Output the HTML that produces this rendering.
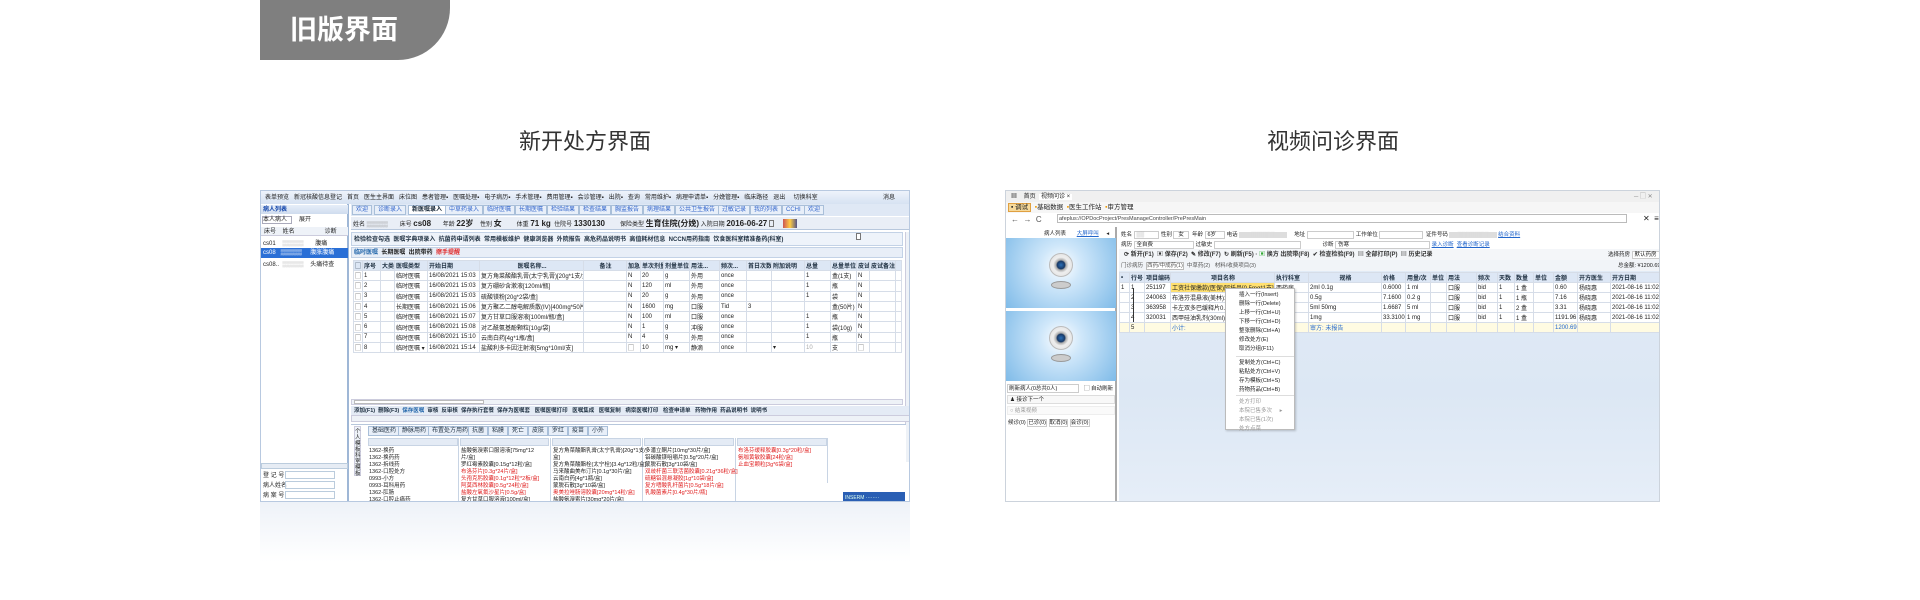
<!DOCTYPE html>
<html><head><meta charset="utf-8">
<style>
*{margin:0;padding:0;box-sizing:border-box}
body{width:1920px;height:600px;background:#fff;position:relative;overflow:hidden;font-family:"Liberation Sans","Noto Sans CJK SC",sans-serif;color:#222}
.a{position:absolute}
.t{position:absolute;white-space:nowrap;font-size:7px;line-height:8px;color:#222}
.tag{left:260px;top:0;width:190px;height:60px;background:#7f7f7f;border-bottom-right-radius:52px;color:#fff;font-weight:bold;font-size:27px;line-height:60px;padding-left:30px;font-family:"Liberation Sans","Noto Sans CJK SC",sans-serif}
.title{font-size:22px;color:#333;top:124px;font-family:"Liberation Sans","Noto Sans CJK SC",sans-serif}
table{border-collapse:collapse;table-layout:fixed;position:absolute}
td{border:1px solid #d6dde8;font-size:6px;white-space:nowrap;overflow:hidden;padding-left:1px;color:#222}
.hd td{background:#dde7f5;font-weight:bold;color:#234}
.red{color:#e02020}
.tab{position:absolute;height:10px;border:1px solid #a9bfd9;background:#e8eff9;font-size:6px;line-height:8px;padding:0 3px;color:#36c;white-space:nowrap}
</style></head><body>

<div class="a tag">旧版界面</div>
<div class="a title" style="left:519px">新开处方界面</div>
<div class="a title" style="left:1267px">视频问诊界面</div>

<!-- LEFT SCREENSHOT -->
<div class="a" style="left:260px;top:502px;width:650px;height:60px;background:linear-gradient(#eef2f8,#fff)"></div>
<div class="a" style="left:260px;top:190px;width:650px;height:312px;background:#fff;border:1px solid #b8c9e0;overflow:hidden">
  <div class="a" style="left:0;top:0;width:650px;height:13px;background:linear-gradient(#eef3fb,#d6e2f2)"></div>
  <div class="t" style="left:4px;top:3px;font-size:6px">表单预览 &nbsp; 新冠核酸信息登记 &nbsp; 首页 &nbsp; 医生主界面 &nbsp; 床位图 &nbsp; 患者管理▪ &nbsp; 医嘱处理▪ &nbsp; 电子病历▪ &nbsp; 手术管理▪ &nbsp; 费用管理▪ &nbsp; 会诊管理▪ &nbsp; 出院▪ &nbsp; 查询 &nbsp; 常用维护▪ &nbsp; 病理申请单▪ &nbsp; 分娩管理▪ &nbsp; 临床路径 &nbsp; 退出 &nbsp; &nbsp; 切换科室</div>
  <div class="t" style="left:622px;top:3px;font-size:6px">消息</div>
  <!-- left panel -->
  <div class="a" style="left:0;top:13px;width:88px;height:299px;background:#fff;border-right:2px solid #9fb7d6"></div>
  <div class="a" style="left:0;top:14px;width:87px;height:9px;background:linear-gradient(#e6eef9,#cfdcee)"></div>
  <div class="t" style="left:2px;top:15px;font-size:6px;color:#14a;font-weight:bold">病人列表</div>
  <div class="a" style="left:1px;top:25px;width:30px;height:8px;border:1px solid #aab;background:#fff"></div>
  <div class="t" style="left:2px;top:25px;font-size:6px">本人病人</div>
  <div class="t" style="left:38px;top:25px;font-size:6px">展开</div>
  <div class="a" style="left:0;top:36px;width:87px;height:9px;background:#eef2f8;border-bottom:1px solid #ccd"></div>
  <div class="t" style="left:3px;top:37px;font-size:6px">床号 &nbsp; &nbsp;姓名 &nbsp; &nbsp; &nbsp; &nbsp; &nbsp; &nbsp; &nbsp; &nbsp; &nbsp;诊断</div>
  <div class="t" style="left:2px;top:49px;font-size:6px">cs01 &nbsp; &nbsp;<span style="color:#bbb">▒▒▒▒▒</span> &nbsp; &nbsp; &nbsp; 腹痛</div>
  <div class="a" style="left:0;top:57px;width:87px;height:10px;background:#2a6fd6"></div>
  <div class="t" style="left:2px;top:58px;font-size:6px;color:#fff">cs08 &nbsp; ▒▒▒▒▒ &nbsp; &nbsp; 腹胀腹痛</div>
  <div class="t" style="left:2px;top:70px;font-size:6px">cs08.. &nbsp;<span style="color:#bbb">▒▒▒▒▒</span> &nbsp; &nbsp;头痛待查</div>
  <div class="a" style="left:0;top:272px;width:87px;height:6px;background:#e6ecf4;border:1px solid #bcd"></div>
  <div class="t" style="left:2px;top:281px;font-size:6px">登 记 号</div><div class="a" style="left:24px;top:280px;width:50px;height:8px;border:1px solid #bcd"></div>
  <div class="t" style="left:2px;top:291px;font-size:6px">病人姓名</div><div class="a" style="left:24px;top:290px;width:50px;height:8px;border:1px solid #bcd"></div>
  <div class="t" style="left:2px;top:301px;font-size:6px">病 案 号</div><div class="a" style="left:24px;top:300px;width:50px;height:8px;border:1px solid #bcd"></div>
  <!-- tabs -->
  <div class="a" style="left:90px;top:13px;width:560px;height:12px;background:#dfe8f5"></div>
  <div class="tab" style="left:91px;top:14px">欢迎</div>
  <div class="tab" style="left:113px;top:14px">诊断录入</div>
  <div class="tab" style="left:147px;top:14px;background:#fff;color:#123;font-weight:bold">新医嘱录入</div>
  <div class="tab" style="left:184px;top:14px">中草药录入</div>
  <div class="tab" style="left:222px;top:14px">临时医嘱</div>
  <div class="tab" style="left:254px;top:14px">长期医嘱</div>
  <div class="tab" style="left:286px;top:14px">检验结果</div>
  <div class="tab" style="left:318px;top:14px">检查结果</div>
  <div class="tab" style="left:350px;top:14px">胸监报告</div>
  <div class="tab" style="left:382px;top:14px">病理结果</div>
  <div class="tab" style="left:414px;top:14px">公共卫生报告</div>
  <div class="tab" style="left:457px;top:14px">过敏记录</div>
  <div class="tab" style="left:489px;top:14px">我的列表</div>
  <div class="tab" style="left:521px;top:14px">CCHI</div>
  <div class="tab" style="left:543px;top:14px">欢迎</div>
  <!-- info -->
  <div class="a" style="left:90px;top:26px;width:560px;height:13px;background:#e9eef6;border-bottom:1px solid #b7c7dc"></div>
  <div class="t" style="left:92px;top:29px;font-size:6px">姓名 <span style="color:#999">▒▒▒▒▒</span> &nbsp; &nbsp; &nbsp; 床号 <b style="font-size:8px">cs08</b> &nbsp; &nbsp; &nbsp; 年龄 <b style="font-size:8px">22岁</b> &nbsp; &nbsp;性别 <b style="font-size:8px">女</b> &nbsp; &nbsp; &nbsp; &nbsp; 体重 <b style="font-size:8px">71 kg</b> &nbsp;住院号 <b style="font-size:8px">1330130</b> &nbsp; &nbsp; &nbsp; &nbsp; 保险类型 <b style="font-size:8px">生育住院(分娩)</b> 入院日期 <b style="font-size:8px">2016-06-27</b></div>
  <div class="a" style="left:508px;top:29px;width:5px;height:7px;border:1px solid #777"></div>
  <div class="a" style="left:522px;top:28px;width:14px;height:9px;background:linear-gradient(90deg,#c55,#fc4,#558)"></div>
  <!-- toolbar -->
  <div class="a" style="left:90px;top:41px;width:552px;height:14px;background:#eef3fa;border:1px solid #c3d2e6"></div>
  <div class="t" style="left:93px;top:45px;font-size:6px;font-weight:bold;color:#234">检验检查勾选 &nbsp;医嘱字典项录入 &nbsp;抗菌药申请列表 &nbsp;常用模板维护 &nbsp;健康浏览器 &nbsp;外院报告 &nbsp;高危药品说明书 &nbsp;高值耗材信息 &nbsp;NCCN用药指南 &nbsp;饮食医科室精准备药(科室)</div>
  <div class="a" style="left:595px;top:42px;width:5px;height:7px;border:1px solid #777;background:#fff"></div>
  <div class="a" style="left:90px;top:56px;width:552px;height:11px;background:#e8eef7;border:1px solid #c3d2e6"></div>
  <div class="t" style="left:93px;top:58px;font-size:6px;font-weight:bold"><span style="color:#26a">临时医嘱</span> &nbsp;长期医嘱 &nbsp;出院带药 &nbsp;<span class="red">擦手提醒</span></div>
  <!-- main table -->
  <table style="left:92px;top:69px;width:548px">
    <colgroup><col style="width:9px"><col style="width:18px"><col style="width:14px"><col style="width:33px"><col style="width:52px"><col style="width:104px"><col style="width:43px"><col style="width:14px"><col style="width:23px"><col style="width:26px"><col style="width:30px"><col style="width:27px"><col style="width:25px"><col style="width:33px"><col style="width:26px"><col style="width:26px"><col style="width:13px"><col style="width:26px"><col style="width:6px"></colgroup>
    <tr class="hd" style="height:9px"><td>▢</td><td>序号</td><td>大类</td><td>医嘱类型</td><td>开始日期</td><td style="text-align:center">医嘱名称...</td><td style="text-align:center">备注</td><td>加急</td><td>单次剂量</td><td>剂量单位</td><td>用法...</td><td>频次...</td><td>首日次数</td><td>附加说明</td><td>总量</td><td>总量单位</td><td>皮试</td><td>皮试备注</td><td></td></tr>
    <tr style="height:10.3px"><td>▢</td><td>1</td><td></td><td>临时医嘱</td><td>16/08/2021 15:03</td><td>复方角菜酸酯乳膏(太宁乳膏)[20g*1支/盒]</td><td></td><td>N</td><td>20</td><td>g</td><td>外用</td><td>once</td><td></td><td></td><td>1</td><td>盒(1支)</td><td>N</td><td></td><td></td></tr>
    <tr style="height:10.3px"><td>▢</td><td>2</td><td></td><td>临时医嘱</td><td>16/08/2021 15:03</td><td>复方硼砂含漱液[120ml/瓶]</td><td></td><td>N</td><td>120</td><td>ml</td><td>外用</td><td>once</td><td></td><td></td><td>1</td><td>瓶</td><td>N</td><td></td><td></td></tr>
    <tr style="height:10.3px"><td>▢</td><td>3</td><td></td><td>临时医嘱</td><td>16/08/2021 15:03</td><td>硫酸镁粉[20g*2袋/盒]</td><td></td><td>N</td><td>20</td><td>g</td><td>外用</td><td>once</td><td></td><td></td><td>1</td><td>袋</td><td>N</td><td></td><td></td></tr>
    <tr style="height:10.3px"><td>▢</td><td>4</td><td></td><td>长期医嘱</td><td>16/08/2021 15:06</td><td>复方聚乙二醇电解质散(IV)[400mg*50片/盒]</td><td></td><td>N</td><td>1600</td><td>mg</td><td>口服</td><td>Tid</td><td>3</td><td></td><td></td><td>盒(50片)</td><td>N</td><td></td><td></td></tr>
    <tr style="height:10.3px"><td>▢</td><td>5</td><td></td><td>临时医嘱</td><td>16/08/2021 15:07</td><td>复方甘草口服溶液[100ml/瓶/盒]</td><td></td><td>N</td><td>100</td><td>ml</td><td>口服</td><td>once</td><td></td><td></td><td>1</td><td>瓶</td><td>N</td><td></td><td></td></tr>
    <tr style="height:10.3px"><td>▢</td><td>6</td><td></td><td>临时医嘱</td><td>16/08/2021 15:08</td><td>对乙酰氨基酚颗粒[10g/袋]</td><td></td><td>N</td><td>1</td><td>g</td><td>冲服</td><td>once</td><td></td><td></td><td>1</td><td>袋(10g)</td><td>N</td><td></td><td></td></tr>
    <tr style="height:10.3px"><td>▢</td><td>7</td><td></td><td>临时医嘱</td><td>16/08/2021 15:10</td><td>云南白药[4g*1瓶/盒]</td><td></td><td>N</td><td>4</td><td>g</td><td>外用</td><td>once</td><td></td><td></td><td>1</td><td>瓶</td><td>N</td><td></td><td></td></tr>
    <tr style="height:10.3px"><td>▢</td><td>8</td><td></td><td>临时医嘱 ▾</td><td>16/08/2021 15:14</td><td>盐酸利多卡因注射液[5mg*10ml/支]</td><td></td><td>▢</td><td>10</td><td>mg ▾</td><td>静滴</td><td>once</td><td></td><td>▾</td><td style="color:#aaa">10</td><td>支</td><td>▢</td><td></td><td></td></tr>
  </table>
  <div class="a" style="left:644px;top:41px;width:5px;height:230px;background:#eef2f7;border-left:1px solid #ccd"></div>
  <div class="a" style="left:90px;top:208px;width:552px;height:6px;background:#eef2f7;border:1px solid #ccd"></div>
  <div class="a" style="left:93px;top:209px;width:130px;height:4px;background:#fff;border:1px solid #bbb"></div>
  <div class="a" style="left:90px;top:215px;width:560px;height:9px;background:#e4ebf5"></div>
  <div class="t" style="left:93px;top:216px;font-size:5.5px;font-weight:bold;color:#234">添加(F1) &nbsp;删除(F3) &nbsp;<span style="color:#26a">保存医嘱</span> &nbsp;审核 &nbsp;反审核 &nbsp;保存执行套餐 &nbsp;保存为医嘱套 &nbsp; 医嘱医嘱打印 &nbsp; 医嘱集成 &nbsp; 医嘱复制 &nbsp; 病案医嘱打印 &nbsp; 检查申请单 &nbsp; 药物作用 &nbsp;药品说明书 &nbsp;说明书</div>
  <div class="a" style="left:90px;top:224px;width:560px;height:7px;background:#eef2f7;border:1px solid #ccd"></div>
  <!-- lower -->
  <div class="a" style="left:90px;top:233px;width:555px;height:79px;background:#fff;border-top:1px solid #b7c7dc"></div>
  <div class="a" style="left:93px;top:235px;width:7px;height:50px;background:#eef2f8;border:1px solid #ccd"></div>
  <div class="t" style="left:94px;top:238px;font-size:5.5px;line-height:6px;width:5px;white-space:normal">个人模板科室模板</div>
  <div class="tab" style="left:107px;top:235px;color:#234">基础医药</div>
  <div class="tab" style="left:137px;top:235px;color:#234">静脉用药</div>
  <div class="tab" style="left:167px;top:235px;color:#234">布置处方用药</div>
  <div class="tab" style="left:207px;top:235px;color:#234">抗菌</div>
  <div class="tab" style="left:227px;top:235px;color:#234">粘膜</div>
  <div class="tab" style="left:247px;top:235px;color:#234">死亡</div>
  <div class="tab" style="left:267px;top:235px;color:#234">皮肤</div>
  <div class="tab" style="left:287px;top:235px;color:#234">罗红</div>
  <div class="tab" style="left:307px;top:235px;color:#234">疫苗</div>
  <div class="tab" style="left:327px;top:235px;color:#234">小外</div>
  <div class="a" style="left:107px;top:247px;width:90px;height:8px;background:#e4ebf5;border:1px solid #c8d4e4"></div>
  <div class="a" style="left:199px;top:247px;width:89px;height:8px;background:#e4ebf5;border:1px solid #c8d4e4"></div>
  <div class="a" style="left:291px;top:247px;width:89px;height:8px;background:#e4ebf5;border:1px solid #c8d4e4"></div>
  <div class="a" style="left:383px;top:247px;width:90px;height:8px;background:#e4ebf5;border:1px solid #c8d4e4"></div>
  <div class="a" style="left:476px;top:247px;width:90px;height:8px;background:#e4ebf5;border:1px solid #c8d4e4"></div>
  <div class="a" style="left:197px;top:247px;width:1px;height:65px;background:#c8d4e4"></div>
  <div class="a" style="left:289px;top:247px;width:1px;height:65px;background:#c8d4e4"></div>
  <div class="a" style="left:381px;top:247px;width:1px;height:65px;background:#c8d4e4"></div>
  <div class="a" style="left:474px;top:247px;width:1px;height:65px;background:#c8d4e4"></div>
  <div class="a" style="left:566px;top:247px;width:1px;height:45px;background:#c8d4e4"></div>
  <div class="t" style="left:108px;top:257px;font-size:5.5px;line-height:7px">1362-换药<br>1362-换药药<br>1362-拆线药<br>1362-口腔处方<br>0993-小方<br>0993-耳科用药<br>1362-肛肠<br>1362-口腔止痛药</div>
  <div class="t" style="left:200px;top:257px;font-size:5.5px;line-height:7px">盐酸氨溴索口服溶液[75mg*12<br>片/盒]<br>罗红霉素胶囊[0.15g*12粒/盒]<br><span class="red">布洛芬片[0.3g*24片/盒]</span><br><span class="red">头孢克肟胶囊[0.1g*12粒*2板/盒]</span><br><span class="red">阿莫西林胶囊[0.5g*24粒/盒]</span><br><span class="red">盐酸左氧氟沙星片[0.5g/盒]</span><br>复方甘草口服溶液[100ml/盒]</div>
  <div class="t" style="left:292px;top:257px;font-size:5.5px;line-height:7px">复方角菜酸酯乳膏(太宁乳膏)[20g*1支/<br>盒]<br>复方角菜酸酯栓(太宁栓)[3.4g*12粒/盒]<br>马来酸曲美布汀片[0.1g*30片/盒]<br>云南白药[4g*1瓶/盒]<br>蒙脱石散[3g*10袋/盒]<br><span class="red">奥美拉唑肠溶胶囊[20mg*14粒/盒]</span><br>盐酸氨溴索片[30mg*20片/盒]</div>
  <div class="t" style="left:384px;top:257px;font-size:5.5px;line-height:7px">多潘立酮片[10mg*30片/盒]<br>铝碳酸镁咀嚼片[0.5g*20片/盒]<br>蒙脱石散[3g*10袋/盒]<br><span class="red">双歧杆菌三联活菌胶囊[0.21g*36粒/盒]</span><br><span class="red">硫糖铝混悬凝胶[1g*10袋/盒]</span><br><span class="red">复方嗜酸乳杆菌片[0.5g*18片/盒]</span><br><span class="red">乳酸菌素片[0.4g*30片/瓶]</span></div>
  <div class="t" style="left:477px;top:257px;font-size:5.5px;line-height:7px"><span class="red">布洛芬缓释胶囊[0.3g*20粒/盒]</span><br><span class="red">氨咖黄敏胶囊[24粒/盒]</span><br><span class="red">止血宝颗粒[3g*6袋/盒]</span></div>
  <div class="a" style="left:582px;top:301px;width:62px;height:11px;background:#2a5fb4"></div>
  <div class="t" style="left:584px;top:303px;font-size:5px;color:#dfe">INSERM ········</div>
  <div class="a" style="left:537px;top:310px;width:45px;height:2px;background:#333"></div>
</div>

<!-- RIGHT SCREENSHOT -->
<div class="a" style="left:1005px;top:190px;width:655px;height:312px;background:#fff;border:1px solid #ccd3dc;overflow:hidden">
  <div class="a" style="left:0;top:0;width:655px;height:11px;background:#f0f0f0"></div>
  <div class="t" style="left:5px;top:2px;font-size:6px">▦ &nbsp; &nbsp;首页 &nbsp;<span style="background:#fff;padding:0 2px">视频问诊 ×</span></div>
  <div class="t" style="left:628px;top:2px;font-size:6px;color:#888">─ ▢ ✕</div>
  <div class="a" style="left:0;top:11px;width:655px;height:11px;background:#f6f6f6"></div>
  <div class="t" style="left:2px;top:13px;font-size:6.5px"><span style="background:#f6d99a;border:1px solid #e0a040;padding:0 2px">▪ 调试</span> &nbsp;<span style="color:#e90">▪</span>基础数据 &nbsp;<span style="color:#e90">▪</span>医生工作站 &nbsp;<span style="color:#e90">▪</span>审方管理</div>
  <div class="t" style="left:5px;top:25px;font-size:8px;color:#555">← &nbsp;→ &nbsp;C</div>
  <div class="a" style="left:51px;top:23px;width:570px;height:9px;border:1px solid #bbb;background:#fff"></div>
  <div class="t" style="left:53px;top:24px;font-size:5.5px;color:#444">afeplus://OPDocProject/PresManageController/PrePresMain</div>
  <div class="t" style="left:637px;top:24px;font-size:8px">✕ &nbsp;≡</div>
  <!-- left panel -->
  <div class="a" style="left:0;top:36px;width:111px;height:276px;background:#fff;border-right:2px solid #aaa"></div>
  <div class="t" style="left:38px;top:39px;font-size:5.5px">病人列表 &nbsp; &nbsp; &nbsp; <span style="color:#26c;text-decoration:underline">大屏呼叫</span> &nbsp; &nbsp; ◂</div>
  <div class="a" style="left:0;top:47px;width:110px;height:70px;background:radial-gradient(circle at 50% 40%,#fff 0,#cfe7fa 30%,#7fbbe8 100%)"></div>
  <div class="a" style="left:0;top:120px;width:110px;height:70px;background:radial-gradient(circle at 50% 40%,#fff 0,#cfe7fa 30%,#7fbbe8 100%)"></div>
  <div class="a" style="left:43px;top:62px;width:24px;height:24px;border-radius:50%;background:radial-gradient(circle,#2a6fb8 0,#1a3a66 25%,#aaa 32%,#eee 50%,#ddd 100%);border:1px solid #bbb"></div>
  <div class="a" style="left:45px;top:90px;width:20px;height:8px;border-radius:50%;background:#ccc;border:1px solid #999"></div>
  <div class="a" style="left:43px;top:135px;width:24px;height:24px;border-radius:50%;background:radial-gradient(circle,#2a6fb8 0,#1a3a66 25%,#aaa 32%,#eee 50%,#ddd 100%);border:1px solid #bbb"></div>
  <div class="a" style="left:45px;top:163px;width:20px;height:8px;border-radius:50%;background:#ccc;border:1px solid #999"></div>
  <div class="a" style="left:1px;top:193px;width:72px;height:9px;border:1px solid #ccc"></div>
  <div class="t" style="left:3px;top:194px;font-size:5.5px">刷新病人(0总共0人)</div>
  <div class="t" style="left:78px;top:194px;font-size:5.5px">▢ 自动刷新</div>
  <div class="a" style="left:1px;top:204px;width:108px;height:9px;border:1px solid #ddd;background:#f8f8f8"></div>
  <div class="t" style="left:4px;top:205px;font-size:5.5px">♟ 接诊下一个</div>
  <div class="a" style="left:1px;top:215px;width:108px;height:9px;border:1px solid #eee;background:#fafafa"></div>
  <div class="t" style="left:4px;top:216px;font-size:5.5px;color:#999">○ 结束视频</div>
  <div class="t" style="left:2px;top:228px;font-size:5.5px">候诊(0) <span style="border:1px solid #ccc">已诊(0)</span> <span style="border:1px solid #ccc">取消(0)</span> <span style="border:1px solid #ccc">会诊(0)</span></div>
  <!-- form -->
  <div class="a" style="left:113px;top:36px;width:542px;height:276px;background:linear-gradient(#e3ecf7 0,#dce7f4 60%,#e6eef8 100%)"></div>
  <div class="a" style="left:113px;top:36px;width:542px;height:22px;background:#fff"></div>
  <div class="t" style="left:115px;top:40px;font-size:5.5px">姓名 <span style="border:1px solid #ccc;color:#aaa;padding:0 14px 0 2px">▒▒</span> 性别 <span style="border:1px solid #ccc;padding:0 4px">女</span> &nbsp;年龄 <span style="border:1px solid #ccc;padding:0 8px 0 2px">6岁</span> 电话 <span style="background:#ddd;color:#ddd;padding:0 12px">▒▒▒▒▒▒</span> &nbsp; &nbsp; 地址 <span style="border:1px solid #ccc;padding:0 22px">&nbsp;</span> 工作单位 <span style="border:1px solid #ccc;padding:0 20px">&nbsp;</span> &nbsp;证件号码 <span style="background:#ddd;color:#ddd;padding:0 8px">▒▒▒▒▒▒▒▒</span> <span style="color:#26c;text-decoration:underline">结合资料</span></div>
  <div class="t" style="left:115px;top:50px;font-size:5.5px">病历 <span style="border:1px solid #ccc;padding:0 40px 0 2px">全自费</span> 过敏史 <span style="border:1px solid #ccc;padding:0 42px">&nbsp;</span> &nbsp; &nbsp; &nbsp; &nbsp; &nbsp; &nbsp; &nbsp;诊断 <span style="border:1px solid #ccc;padding:0 80px 0 2px">伤寒</span> <span style="color:#26c;text-decoration:underline">录入诊断</span> &nbsp;<span style="color:#26c;text-decoration:underline">查看诊断记录</span></div>
  <div class="a" style="left:113px;top:58px;width:542px;height:11px;background:#f4f6f9"></div>
  <div class="t" style="left:118px;top:60px;font-size:6px;font-weight:bold;color:#333">⟳ 新开(F1) &nbsp;▣ 保存(F2) &nbsp;✎ 修改(F7) &nbsp;↻ 刷新(F5) · <span style="color:#3a3">▣</span> 换方 出院带(F8) &nbsp;✔ 检查检验(F9) &nbsp;▤ 全部打印(P) &nbsp;▤ 历史记录</div>
  <div class="t" style="left:602px;top:60px;font-size:5.5px">选择药房 <span style="border:1px solid #ccc;padding:0 12px 0 2px;background:#fff">默认药房</span></div>
  <div class="a" style="left:113px;top:69px;width:542px;height:11px;background:#f1f4f8"></div>
  <div class="t" style="left:115px;top:71px;font-size:5.5px;color:#555">门诊病历 &nbsp;<span style="border:1px solid #bbb;background:#fff">西药/中成药(1)</span> &nbsp;中草药(2) &nbsp; 材料/收费项目(3)</div>
  <div class="t" style="left:612px;top:71px;font-size:5.5px">总金额: ¥1200.69元</div>
  <table style="left:113px;top:81px;width:542px">
    <colgroup><col style="width:10px"><col style="width:15px"><col style="width:26px"><col style="width:104px"><col style="width:34px"><col style="width:73px"><col style="width:24px"><col style="width:25px"><col style="width:16px"><col style="width:30px"><col style="width:21px"><col style="width:17px"><col style="width:19px"><col style="width:20px"><col style="width:24px"><col style="width:33px"><col style="width:51px"></colgroup>
    <tr class="hd" style="height:8px"><td>•</td><td>行号</td><td>项目编码</td><td style="text-align:center">项目名称</td><td>执行科室</td><td style="text-align:center">规格</td><td>价格</td><td>用量/次</td><td>单位</td><td>用法</td><td>频次</td><td>天数</td><td>数量</td><td>单位</td><td>金额</td><td>开方医生</td><td>开方日期</td></tr>
    <tr style="height:9.2px;background:#fff"><td>1</td><td>1</td><td>251197</td><td style="background:#ffe070">工资社保缴款(医保)阿托品[0.5mg*1支]</td><td>西药房</td><td>2ml 0.1g</td><td>0.6000</td><td>1 ml</td><td></td><td>口服</td><td>bid</td><td>1</td><td>1 盒</td><td></td><td>0.60</td><td>杨晓惠</td><td>2021-08-16 11:02</td></tr>
    <tr style="height:9.2px;background:#fff"><td></td><td>2</td><td>240063</td><td>布洛芬混悬液(美林)10ml</td><td></td><td>0.5g</td><td>7.1600</td><td>0.2 g</td><td></td><td>口服</td><td>bid</td><td>1</td><td>1 瓶</td><td></td><td>7.16</td><td>杨晓惠</td><td>2021-08-16 11:02</td></tr>
    <tr style="height:9.2px;background:#fff"><td></td><td>3</td><td>363958</td><td>卡左双多巴缓释片0.2g</td><td></td><td>5ml 50mg</td><td>1.6687</td><td>5 ml</td><td></td><td>口服</td><td>bid</td><td>1</td><td>2 盒</td><td></td><td>3.31</td><td>杨晓惠</td><td>2021-08-16 11:02</td></tr>
    <tr style="height:9.2px;background:#fff"><td></td><td>4</td><td>320031</td><td>西甲硅油乳剂(30ml)</td><td></td><td>1mg</td><td>33.3100</td><td>1 mg</td><td></td><td>口服</td><td>bid</td><td>1</td><td>1 盒</td><td></td><td>1191.96</td><td>杨晓惠</td><td>2021-08-16 11:02</td></tr>
    <tr style="height:9.2px;background:#fffbe2"><td></td><td>5</td><td></td><td style="color:#26c">小计:</td><td></td><td style="color:#26c">审方: 未报告</td><td></td><td></td><td></td><td></td><td></td><td></td><td></td><td></td><td style="color:#26c">1200.69</td><td></td><td></td></tr>
  </table>
  <div class="a" style="left:127px;top:97px;width:2px;height:34px;border-left:1px solid #333"></div>
  <!-- context menu -->
  <div class="a" style="left:219px;top:97px;width:70px;height:142px;background:#fff;border:1px solid #bbb;box-shadow:1px 1px 2px rgba(0,0,0,.2)"></div>
  <div class="t" style="left:233px;top:100px;font-size:5.5px;line-height:9px">插入一行(Insert)<br>删除一行(Delete)<br>上移一行(Ctrl+U)<br>下移一行(Ctrl+D)<br>整张删除(Ctrl+A)<br>修改处方(E)<br>取消分组(F11)</div>
  <div class="a" style="left:230px;top:165px;width:58px;height:1px;background:#ddd"></div>
  <div class="t" style="left:233px;top:168px;font-size:5.5px;line-height:9px">复制处方(Ctrl+C)<br>粘贴处方(Ctrl+V)<br>存为模板(Ctrl+S)<br>药物药品(Ctrl+B)</div>
  <div class="a" style="left:230px;top:204px;width:58px;height:1px;background:#ddd"></div>
  <div class="t" style="left:233px;top:207px;font-size:5.5px;line-height:9px;color:#999">处方打印<br>本院已售多次 &nbsp; &nbsp; ▸<br>本院已售(1次)<br>处方点菜</div>
</div>

</body></html>
